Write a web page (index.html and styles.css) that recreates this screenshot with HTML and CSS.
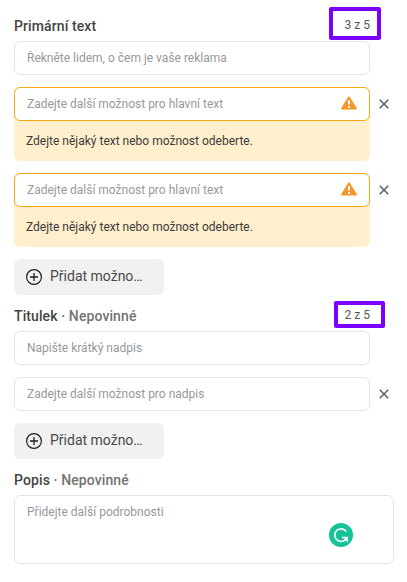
FILE: index.html
```
<!DOCTYPE html>
<html lang="cs">
<head>
    <meta charset="UTF-8">
    <meta name="viewport" content="width=device-width, initial-scale=1.0">
    <title>Text reklamy</title>
    <link rel="stylesheet" href="styles.css">
</head>
<body>
    <svg class="icon-defs" width="0" height="0">
        <symbol id="icon-warning" viewBox="0 0 16 14">
            <path d="M7.1 .9 Q8 -.5 8.900 .9 L15.700 12 Q16.300 13.500 14.900 13.500 H1.100 Q-.3 13.500 .3 12 Z" fill="#f7942a"/>
            <path d="M8 4.300 V8.600 M8 10 V12" stroke="#fff" stroke-width="2"/>
        </symbol>
        <symbol id="icon-close" viewBox="0 0 10 10">
            <path d="M.7 .7 L9.300 9.300 M9.300 .7 L.7 9.300" stroke="#5c6370" stroke-width="1.600" fill="none"/>
        </symbol>
        <symbol id="icon-plus" viewBox="0 0 16 16">
            <circle cx="8" cy="8" r="7.400" fill="none" stroke="#1c1e21" stroke-width="1.200"/>
            <path d="M8 4 V12 M4 8 H12" stroke="#1c1e21" stroke-width="1.300"/>
        </symbol>
    </svg>

    <div class="container">
        <div class="section">
            <div class="section-header">
                <h2>Primární text</h2>
                <span class="count count-primary">3 z 5</span>
            </div>
            <div class="input-row">
                <input type="text" placeholder="Řekněte lidem, o čem je vaše reklama">
            </div>
            <div class="input-row">
                <div class="input-group warning">
                    <input type="text" placeholder="Zadejte další možnost pro hlavní text">
                    <svg class="warning-icon"><use href="#icon-warning"/></svg>
                    <p class="message">Zdejte nějaký text nebo možnost odeberte.</p>
                </div>
                <button class="close"><svg><use href="#icon-close"/></svg></button>
            </div>
            <div class="input-row">
                <div class="input-group warning">
                    <input type="text" placeholder="Zadejte další možnost pro hlavní text">
                    <svg class="warning-icon"><use href="#icon-warning"/></svg>
                    <p class="message">Zdejte nějaký text nebo možnost odeberte.</p>
                </div>
                <button class="close"><svg><use href="#icon-close"/></svg></button>
            </div>
            <button class="add"><svg><use href="#icon-plus"/></svg><span>Přidat možno…</span></button>
        </div>

        <div class="section">
            <div class="section-header">
                <h2>Titulek <span class="optional">· Nepovinné</span></h2>
                <span class="count count-title">2 z 5</span>
            </div>
            <div class="input-row">
                <input type="text" placeholder="Napište krátký nadpis">
            </div>
            <div class="input-row">
                <input type="text" placeholder="Zadejte další možnost pro nadpis">
                <button class="close"><svg><use href="#icon-close"/></svg></button>
            </div>
            <button class="add"><svg><use href="#icon-plus"/></svg><span>Přidat možno…</span></button>
        </div>

        <div class="section">
            <div class="section-header">
                <h2>Popis <span class="optional">· Nepovinné</span></h2>
            </div>
            <div class="description">
                <textarea placeholder="Přidejte další podrobnosti"></textarea>
                <svg class="grammar" viewBox="0 0 24 24">
                    <circle cx="12" cy="12" r="12" fill="#15c39a"/>
                    <path d="M17.200 8.500 A6.300 6.300 0 1 0 16.400 16.700" fill="none" stroke="#fff" stroke-width="1.600"/>
                    <path d="M13 13.700 H18.800 V18.800 H17.300 V16.800 L15.600 17.600 L14.600 16.400 L16.200 15.200 H13 Z" fill="#fff"/>
                </svg>
            </div>
        </div>
    </div>
</body>
</html>
```

FILE: styles.css
```
* {
    box-sizing: border-box;
}
body {
    margin: 0;
    background-color: #fff;
    font-family: Roboto, "Liberation Sans", sans-serif;
    color: #444;
}
.icon-defs {
    position: absolute;
}
.container {
    width: 380px;
    margin-left: 14px;
    padding-top: 5px;
}
.section-header {
    display: flex;
    justify-content: space-between;
    align-items: center;
    width: 356px;
    height: 36px;
    padding-top: 6px;
}
h2 {
    margin: 0;
    font-size: 14px;
    font-weight: 500;
    line-height: 18px;
    letter-spacing: 0.1px;
}
.optional {
    color: #737373;
}
.count {
    position: relative;
    font-size: 12px;
    line-height: 16px;
    margin-top: -3px;
    color: #555;
}
.count::after {
    content: "";
    position: absolute;
    box-sizing: border-box;
    border: 4px solid #7b00ff;
    border-radius: 2px;
}
.count-primary::after {
    top: -10px;
    right: -11px;
    width: 52px;
    height: 33px;
}
.count-title::after {
    top: -6px;
    right: -15px;
    width: 51px;
    height: 27px;
}
.input-row {
    display: flex;
    align-items: flex-start;
    margin-bottom: 12px;
}
.input-group {
    position: relative;
    width: 356px;
}
input,
textarea {
    display: block;
    width: 356px;
    height: 34px;
    padding: 0 12px;
    border: 1px solid #e5e5e5;
    border-radius: 6px;
    background-color: #fff;
    font-family: inherit;
    font-size: 12px;
    outline: none;
}
input::placeholder,
textarea::placeholder {
    color: #96999c;
    opacity: 1;
}
.warning {
    background-color: #ffefcc;
    border-radius: 6px;
}
.warning input {
    border-color: #f9a516;
}
.warning-icon {
    position: absolute;
    top: 9px;
    right: 13px;
    width: 16px;
    height: 14px;
}
.message {
    margin: 0;
    padding: 0 12px;
    font-size: 12px;
    line-height: 40px;
    color: #3c3c3c;
}
button {
    border: none;
    font-family: inherit;
}
.close {
    width: 10px;
    height: 34px;
    margin-left: 9px;
    padding: 0;
    background: none;
}
.close svg {
    display: block;
    width: 10px;
    height: 10px;
}
.add {
    display: flex;
    align-items: center;
    gap: 8px;
    width: 150px;
    height: 36px;
    padding: 0 12px;
    border-radius: 6px;
    background-color: #f1f1f1;
    color: #4a4a4a;
    font-size: 14px;
}
.add svg {
    width: 16px;
    height: 16px;
}
.add span {
    padding-bottom: 2px;
}
.description {
    position: relative;
}
textarea {
    width: 380px;
    height: 69px;
    padding: 9px 12px;
    resize: none;
}
.grammar {
    position: absolute;
    top: 28px;
    right: 41px;
    width: 24px;
    height: 24px;
}
```
